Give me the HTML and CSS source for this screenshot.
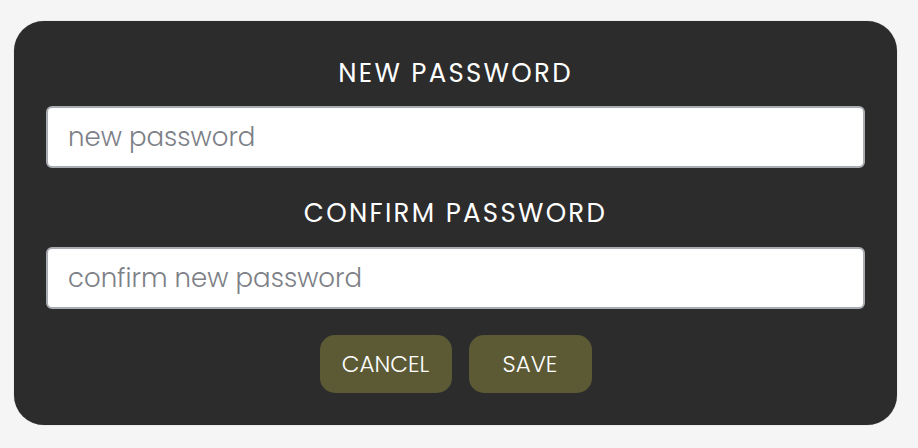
FILE: index.html
```html
<!DOCTYPE html>
<html>
<head>
<meta charset="utf-8">
<link rel="stylesheet" href="styles.css">
</head>
<body>
<form class="card">
  <label class="label" for="np">NEW PASSWORD</label>
  <input class="field" id="np" type="password" placeholder="new password">
  <label class="label label-second" for="cp">CONFIRM PASSWORD</label>
  <input class="field" id="cp" type="password" placeholder="confirm new password">
  <div class="actions">
    <button type="button" class="btn btn-cancel">CANCEL</button>
    <button type="button" class="btn btn-save">SAVE</button>
  </div>
</form>
</body>
</html>
```

FILE: styles.css
```css
html, body {
  margin: 0;
  padding: 0;
  background: #f5f5f5;
}
body {
  padding: 21px 21px 23px 14px;
  font-family: "Poppins", "Open Sans", "DejaVu Sans", sans-serif;
}
.card {
  box-sizing: border-box;
  width: 883px;
  height: 404px;
  background: #2c2c2c;
  border-radius: 30px;
  padding: 37px 32px 32px;
  display: flex;
  flex-direction: column;
  box-shadow: 0 0 1px rgba(0,0,0,0.35);
}
.label {
  display: block;
  text-align: center;
  color: #ffffff;
  font-size: 26px;
  line-height: 30px;
  letter-spacing: 2.3px;
  font-weight: 400;
  margin-bottom: 18px;
}
.label-second {
  margin-top: 30px;
  margin-bottom: 19px;
}
.field {
  box-sizing: border-box;
  width: 100%;
  height: 62px;
  border: 2px solid #a9acb1;
  border-radius: 6px;
  background: #ffffff;
  padding: 0 20px;
  font-family: inherit;
  font-size: 26px;
  font-weight: 300;
  color: #333;
  outline: none;
}
.field::placeholder {
  color: #7d8087;
  font-weight: 300;
}
.actions {
  display: flex;
  justify-content: center;
  gap: 17px;
  margin-top: 26px;
}
.btn {
  height: 58px;
  border: none;
  border-radius: 15px;
  background: #5b5a35;
  color: #ffffff;
  font-family: inherit;
  font-size: 23px;
  font-weight: 300;
  padding: 0;
}
.btn-cancel { width: 132px; }
.btn-save { width: 123px; }
```
